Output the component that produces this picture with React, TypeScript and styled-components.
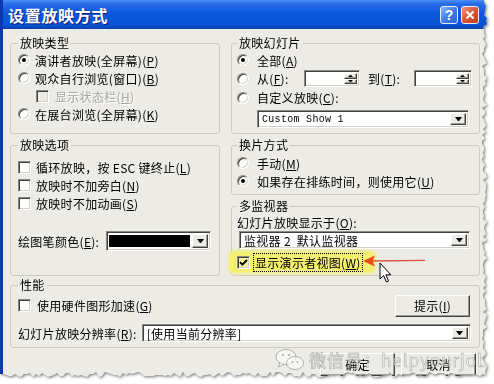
import React from "react";
import styled, { createGlobalStyle } from "styled-components";

const face = "#ecebe6";

const raised = `
  border: 1px solid;
  border-color: #fff #404040 #404040 #fff;
  box-shadow: inset -1px -1px #9d9d97, inset 1px 1px ${face};
  background: ${face};
`;

const sunken = `
  border: 1px solid;
  border-color: #8a8a84 #fff #fff #8a8a84;
  box-shadow: inset 1px 1px #404040, inset -1px -1px #d4d0c8;
`;

// torn paper edge on the right and bottom of the screenshot
const rnd = (i: number) => {
  const v = Math.sin(i * 12.9898 + 78.233) * 43758.5453;
  return v - Math.floor(v);
};
const torn = (() => {
  const pts: string[] = ["0 0", "484px 0"];
  for (let y = 3; y < 374; y += 3) pts.push(`${482 + Math.round(rnd(y) * 5)}px ${y}px`);
  for (let x = 486; x >= 0; x -= 3) pts.push(`${x}px ${372 + Math.round(rnd(x + 500) * 5)}px`);
  return `polygon(${pts.join(",")})`;
})();

const GlobalStyle = createGlobalStyle`
  html, body { margin: 0; padding: 0; background: #fff; }
  body { font-family: "Noto Sans CJK SC", "Noto Sans", sans-serif; font-size: 12px; color: #000; }
`;

const Shadow = styled.div`
  width: 494px;
  height: 384px;
  filter: drop-shadow(1px 1px 1.5px rgba(0, 0, 0, 0.55));
`;

const Dialog = styled.div`
  position: relative;
  width: 490px;
  height: 380px;
  box-sizing: border-box;
  border-left: 3px solid #0b37b0;
  background: ${face};
  clip-path: ${torn};
  display: flex;
  flex-direction: column;
  overflow: hidden;
`;

const TitleBar = styled.div`
  flex: none;
  height: 29px;
  display: flex;
  align-items: center;
  padding: 0 11px 0 5px;
  background: linear-gradient(#4a92f7 0%, #2a6ee8 12%, #0d58dd 45%, #0a52d6 85%, #0841b0 100%);
`;

const Title = styled.span`
  color: #fff;
  font-size: 16px;
  font-weight: bold;
  letter-spacing: 0.7px;
  text-shadow: 1px 1px #0a2374;
`;

const Caption = styled.div`
  margin-left: auto;
  display: flex;
  gap: 3px;
`;

const CapBtn = styled.span<{ $close?: boolean }>`
  width: 18px;
  height: 18px;
  box-sizing: border-box;
  border: 1px solid #e8eefc;
  border-radius: 3px;
  display: flex;
  align-items: center;
  justify-content: center;
  color: #fff;
  font: bold 14px "Liberation Sans", sans-serif;
  background: ${(p) =>
    p.$close
      ? "linear-gradient(135deg, #f0967a, #d9572f 50%, #c2401c)"
      : "linear-gradient(135deg, #8ab6fb, #3f7ee9 50%, #2a62d4)"};
`;

const Body = styled.div`
  flex: 1;
  padding: 7px 0 0 7px;
`;

const Columns = styled.div`
  display: flex;
  gap: 11px;
`;

const Column = styled.div<{ $w: number }>`
  width: ${(p) => p.$w}px;
  display: flex;
  flex-direction: column;
  gap: 4px;
`;

const Group = styled.fieldset<{ $h: number; $pt?: number; $pl?: number; $pr?: number }>`
  margin: 0;
  min-width: 0;
  box-sizing: border-box;
  height: ${(p) => p.$h}px;
  padding: ${(p) => p.$pt ?? 0}px ${(p) => p.$pr ?? 8}px 0 ${(p) => p.$pl ?? 7}px;
  border: 1px solid #cacac0;
  border-radius: 3px;
`;

const Legend = styled.legend`
  padding: 0 2px;
  font-size: 12px;
  line-height: 14px;
  letter-spacing: 0.3px;
`;

const Row = styled.div<{ $h?: number; $gap?: number; $indent?: number; $mt?: number }>`
  display: flex;
  align-items: center;
  height: ${(p) => p.$h ?? 18}px;
  gap: ${(p) => p.$gap ?? 5}px;
  padding-left: ${(p) => p.$indent ?? 0}px;
  margin-top: ${(p) => p.$mt ?? 0}px;
`;

const Label = styled.span<{ $off?: boolean; $w?: number }>`
  white-space: pre;
  letter-spacing: 0.3px;
  flex: none;
  width: ${(p) => (p.$w ? `${p.$w}px` : "auto")};
  color: ${(p) => (p.$off ? "#a5a59e" : "#000")};
  text-shadow: ${(p) => (p.$off ? "1px 1px #fff" : "none")};
`;

const U = styled.span`
  text-decoration: underline;
`;

const Radio = styled.span<{ $on?: boolean }>`
  position: relative;
  flex: none;
  width: 12px;
  height: 12px;
  box-sizing: border-box;
  border-radius: 50%;
  background: #fff;
  ${sunken}
  &::after {
    content: "";
    display: ${(p) => (p.$on ? "block" : "none")};
    position: absolute;
    left: 3px;
    top: 3px;
    width: 4px;
    height: 4px;
    border-radius: 50%;
    background: #000;
  }
`;

const Check = styled.span<{ $off?: boolean; $bg?: string }>`
  flex: none;
  width: 13px;
  height: 13px;
  box-sizing: border-box;
  display: flex;
  align-items: center;
  justify-content: center;
  background: ${(p) => p.$bg ?? (p.$off ? face : "#fff")};
  ${sunken}
`;

const Combo = styled.div<{ $w: number; $h?: number; $ml?: number; $mt?: number; $mono?: boolean }>`
  flex: none;
  width: ${(p) => p.$w}px;
  height: ${(p) => p.$h ?? 18}px;
  margin-left: ${(p) => (p.$ml === undefined ? "auto" : `${p.$ml}px`)};
  margin-top: ${(p) => p.$mt ?? 0}px;
  box-sizing: border-box;
  display: flex;
  align-items: center;
  padding: 2px 2px 2px 4px;
  background: #fff;
  white-space: pre;
  letter-spacing: 0.3px;
  font-family: ${(p) => (p.$mono ? '"Liberation Mono", monospace' : "inherit")};
  font-size: ${(p) => (p.$mono ? "10px" : "12px")};
  ${sunken}
`;

const Swatch = styled.span`
  flex: 1;
  align-self: stretch;
  margin: 1px 2px 1px -2px;
  background: #000;
`;

const DropBtn = styled.span`
  flex: none;
  margin-left: auto;
  width: 16px;
  height: 100%;
  box-sizing: border-box;
  display: flex;
  align-items: center;
  justify-content: center;
  ${raised}
  &::after {
    content: "";
    width: 1px;
    border-left: 3px solid transparent;
    border-right: 3px solid transparent;
    border-top: 4px solid #000;
  }
`;

const Spin = styled.div<{ $w: number; $ml: number }>`
  flex: none;
  width: ${(p) => p.$w}px;
  height: 17px;
  margin-left: ${(p) => p.$ml}px;
  box-sizing: border-box;
  display: flex;
  justify-content: flex-end;
  padding: 2px;
  background: #fff;
  ${sunken}
`;

const SpinBtns = styled.div`
  width: 13px;
  display: flex;
  flex-direction: column;
`;

const SpinBtn = styled.span<{ $up?: boolean }>`
  flex: 1;
  box-sizing: border-box;
  display: flex;
  align-items: center;
  justify-content: center;
  ${raised}
  &::after {
    content: "";
    width: 1px;
    border-left: 2px solid transparent;
    border-right: 2px solid transparent;
    ${(p) => (p.$up ? "border-bottom: 2px solid #000;" : "border-top: 2px solid #000;")}
  }
`;

const Button = styled.span<{ $w: number; $h: number; $ml?: string }>`
  flex: none;
  width: ${(p) => p.$w}px;
  height: ${(p) => p.$h}px;
  margin-left: ${(p) => p.$ml ?? "0"};
  box-sizing: border-box;
  display: flex;
  align-items: center;
  justify-content: center;
  letter-spacing: 0.3px;
  ${raised}
`;

const Highlight = styled.div`
  display: flex;
  align-items: center;
  gap: 4px;
  height: 20px;
  width: fit-content;
  margin: 3px 0 0 -7px;
  padding: 0 12px 0 7px;
  background: #f3ef70;
  border-radius: 4px;
  box-shadow: 0 0 3px 2px rgba(243, 239, 112, 0.8);
`;

const Focus = styled.span`
  outline: 1px dotted #000;
  outline-offset: 0;
  padding: 0 1px;
  white-space: pre;
  letter-spacing: 0.3px;
`;

const Wide = styled.div`
  margin-top: 2px;
  width: 470px;
`;

const ButtonRow = styled.div`
  width: 470px;
  margin-top: 5px;
  display: flex;
  justify-content: flex-end;
  gap: 6px;
  padding-right: 4px;
  box-sizing: border-box;
`;

const Arrow = styled.svg`
  position: absolute;
  left: 358px;
  top: 254px;
`;

const Cursor = styled.svg`
  position: absolute;
  left: 376px;
  top: 262px;
`;

const Watermark = styled.div`
  position: absolute;
  left: 272px;
  top: 347px;
  display: flex;
  align-items: center;
  gap: 4px;
  font-size: 17px;
  letter-spacing: 1px;
  color: rgba(255, 255, 255, 0.6);
  -webkit-text-stroke: 0.6px rgba(110, 110, 110, 0.55);
  white-space: nowrap;
`;

const Acc = ({ k }: { k: string }) => (
  <>
    (<U>{k}</U>)
  </>
);

const CheckMark = () => (
  <svg width="9" height="9" viewBox="0 0 9 9">
    <path d="M1 4.2 L3.4 6.6 L8 2" fill="none" stroke="#000" strokeWidth="1.9" />
  </svg>
);

const App = () => (
  <>
    <GlobalStyle />
    <Shadow>
      <Dialog>
        <TitleBar>
          <Title>设置放映方式</Title>
          <Caption>
            <CapBtn>?</CapBtn>
            <CapBtn $close>
              <svg width="10" height="10" viewBox="0 0 10 10">
                <path d="M1.5 1.5 L8.5 8.5 M8.5 1.5 L1.5 8.5" stroke="#fff" strokeWidth="2" />
              </svg>
            </CapBtn>
          </Caption>
        </TitleBar>
        <Body>
          <Columns>
            <Column $w={210}>
              <Group $h={98} $pt={1}>
                <Legend>放映类型</Legend>
                <Row>
                  <Radio $on />
                  <Label>
                    演讲者放映(全屏幕)<Acc k="P" />
                  </Label>
                </Row>
                <Row>
                  <Radio />
                  <Label>
                    观众自行浏览(窗口)<Acc k="B" />
                  </Label>
                </Row>
                <Row $indent={18} $gap={6}>
                  <Check $off />
                  <Label $off>
                    显示状态栏<Acc k="H" />
                  </Label>
                </Row>
                <Row>
                  <Radio />
                  <Label>
                    在展台浏览(全屏幕)<Acc k="K" />
                  </Label>
                </Row>
              </Group>
              <Group $h={138} $pt={6}>
                <Legend>放映选项</Legend>
                <Row>
                  <Check />
                  <Label>
                    循环放映，按 ESC 键终止<Acc k="L" />
                  </Label>
                </Row>
                <Row>
                  <Check />
                  <Label>
                    放映时不加旁白<Acc k="N" />
                  </Label>
                </Row>
                <Row>
                  <Check />
                  <Label>
                    放映时不加动画<Acc k="S" />
                  </Label>
                </Row>
                <Row $h={20} $mt={19}>
                  <Label>
                    绘图笔颜色<Acc k="E" />:
                  </Label>
                  <Combo $w={105} $h={20}>
                    <Swatch />
                    <DropBtn />
                  </Combo>
                </Row>
              </Group>
            </Column>
            <Column $w={249}>
              <Group $h={98} $pt={1} $pl={5} $pr={9}>
                <Legend>放映幻灯片</Legend>
                <Row $gap={8}>
                  <Radio $on />
                  <Label>
                    全部<Acc k="A" />
                  </Label>
                </Row>
                <Row $gap={8} $h={19}>
                  <Radio />
                  <Label $w={39}>
                    从<Acc k="F" />:
                  </Label>
                  <Spin $w={56} $ml={0}>
                    <SpinBtns>
                      <SpinBtn $up />
                      <SpinBtn />
                    </SpinBtns>
                  </Spin>
                  <Label $w={38}>
                    到<Acc k="T" />:
                  </Label>
                  <Spin $w={58} $ml={0}>
                    <SpinBtns>
                      <SpinBtn $up />
                      <SpinBtn />
                    </SpinBtns>
                  </Spin>
                </Row>
                <Row $gap={8} $h={19}>
                  <Radio />
                  <Label>
                    自定义放映<Acc k="C" />:
                  </Label>
                </Row>
                <Combo $w={212} $ml={20} $mt={3} $mono>
                  Custom Show 1
                  <DropBtn />
                </Combo>
              </Group>
              <Group $h={57} $pt={2} $pl={5} $pr={9}>
                <Legend>换片方式</Legend>
                <Row $gap={8}>
                  <Radio />
                  <Label>
                    手动<Acc k="M" />
                  </Label>
                </Row>
                <Row $gap={8}>
                  <Radio $on />
                  <Label>
                    如果存在排练时间，则使用它<Acc k="U" />
                  </Label>
                </Row>
              </Group>
              <Group $h={77} $pl={5} $pr={9}>
                <Legend>多监视器</Legend>
                <Row>
                  <Label>
                    幻灯片放映显示于<Acc k="O" />:
                  </Label>
                </Row>
                <Combo $w={231} $ml={2}>
                  {"监视器 2  默认监视器"}
                  <DropBtn />
                </Combo>
                <Highlight>
                  <Check $bg="#f6f39a">
                    <CheckMark />
                  </Check>
                  <Focus>
                    显示演示者视图<Acc k="W" />
                  </Focus>
                </Highlight>
              </Group>
            </Column>
          </Columns>
          <Wide>
            <Group $h={70} $pt={2} $pr={9}>
              <Legend>性能</Legend>
              <Row $h={23} $gap={6}>
                <Check />
                <Label>
                  使用硬件图形加速<Acc k="G" />
                </Label>
                <Button $w={75} $h={22} $ml="auto">
                  提示<Acc k="I" />
                </Button>
              </Row>
              <Row $mt={7}>
                <Label>
                  幻灯片放映分辨率<Acc k="R" />:
                </Label>
                <Combo $w={329}>
                  [使用当前分辨率]
                  <DropBtn />
                </Combo>
              </Row>
            </Group>
          </Wide>
          <ButtonRow>
            <Button $w={75} $h={23}>确定</Button>
            <Button $w={75} $h={23}>取消</Button>
          </ButtonRow>
        </Body>

        <Arrow width="66" height="14" viewBox="0 0 66 14">
          <path d="M11 7 L64 6.4" stroke="#e0503a" strokeWidth="1.4" fill="none" />
          <path d="M2 7 L14 1.5 L11.5 7 L14 12.5 Z" fill="#ea4a1c" />
        </Arrow>
        <Cursor width="14" height="22" viewBox="0 0 14 22">
          <path
            d="M1 1 L1 17 L4.6 13.6 L7.4 20 L9.6 19 L6.9 12.8 L11.8 12.8 Z"
            fill="#fff"
            stroke="#000"
            strokeWidth="1"
            strokeLinejoin="round"
          />
        </Cursor>
        <Watermark>
          <svg width="30" height="24" viewBox="0 0 30 24">
            <ellipse cx="11" cy="9" rx="10" ry="7.5" fill="rgba(255,255,255,0.6)" stroke="rgba(120,120,120,0.55)" />
            <path d="M5 14.5 L3.5 19 L9 16" fill="rgba(255,255,255,0.6)" stroke="rgba(120,120,120,0.55)" />
            <ellipse cx="20" cy="15" rx="8.5" ry="6.5" fill="rgba(255,255,255,0.6)" stroke="rgba(120,120,120,0.55)" />
            <circle cx="8" cy="7" r="1.1" fill="rgba(120,120,120,0.6)" />
            <circle cx="14" cy="7" r="1.1" fill="rgba(120,120,120,0.6)" />
            <circle cx="17.5" cy="14" r="0.9" fill="rgba(120,120,120,0.6)" />
            <circle cx="22.5" cy="14" r="0.9" fill="rgba(120,120,120,0.6)" />
          </svg>
          微信号：helpyourjob
        </Watermark>
      </Dialog>
    </Shadow>
  </>
);

export default App;
